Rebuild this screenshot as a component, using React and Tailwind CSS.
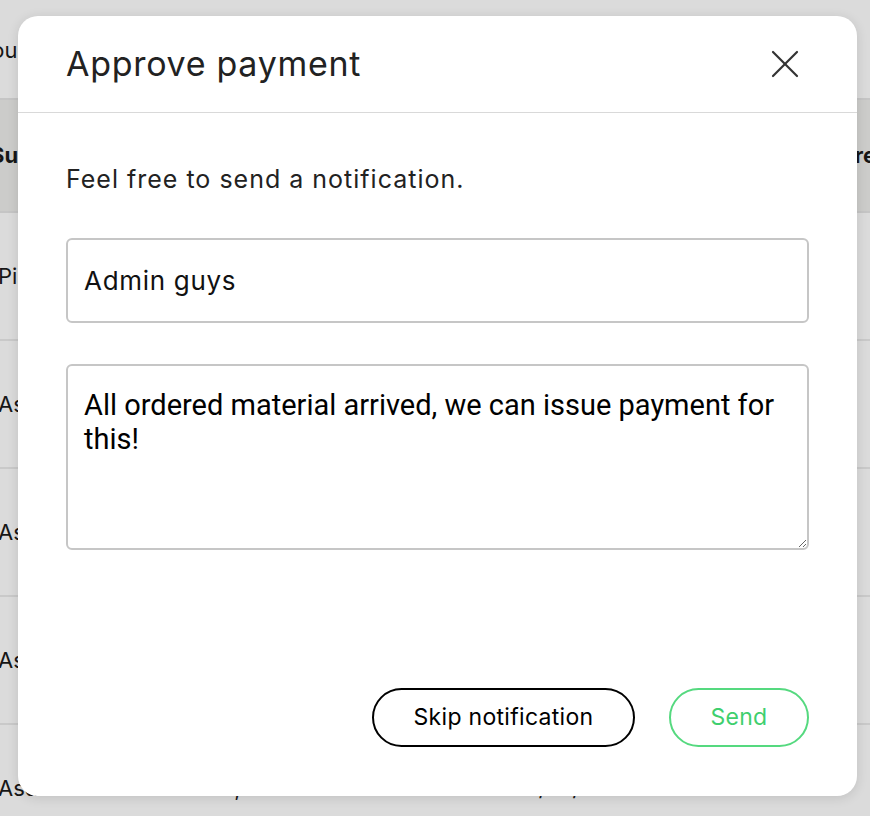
import { X } from "lucide-react";

const rows = [
  { name: "Pizza party", date: "Mon, 3rd", who: "Jim", when: "12/06/2023" },
  { name: "Asd", date: "Tue, 4th", who: "Ann", when: "13/06/2023" },
  { name: "Asd", date: "Wed, 5th", who: "Tom", when: "14/06/2023" },
  { name: "Asd", date: "Thu, 6th", who: "Eva", when: "15/06/2023" },
  { name: "Asd", date: "Fri, 20th", who: "Jim", when: "22/07/2023" },
];

const Background = () => (
  <div className="w-full h-full bg-white text-[#1a1a1a]">
    <p className="h-[98px] pt-[34px] -ml-[22px] text-[22px]">Your orders</p>
    <div className="h-[115px] bg-[#eeeeec] border-y-2 border-[#e6e6e6] flex items-center justify-between -ml-[10px] -mr-[6px] text-[22px] font-bold">
      <span>Supplier</span>
      <span>Store</span>
    </div>
    {rows.map((row, i) => (
      <div
        key={i}
        className="h-[128px] border-b-2 border-[#eaeaea] flex items-center gap-[90px] text-[22px] -ml-[2px]"
      >
        <span className="w-[120px]">{row.name}</span>
        <span>{row.date}</span>
        <span>{row.who}</span>
        <span>{row.when}</span>
      </div>
    ))}
  </div>
);

const ApproveModal = () => (
  <div className="absolute left-[18px] top-[16px] w-[839px] h-[780px] bg-white rounded-[20px] shadow-[0_2px_12px_rgba(0,0,0,0.12)] flex flex-col">
    <div className="h-[97px] px-[48px] flex items-center justify-between border-b border-[#d9d9d9]">
      <h2 className="text-[34px] tracking-[0.7px] text-[#222] leading-none">Approve payment</h2>
      <button className="text-[#333]">
        <X size={48} strokeWidth={1.1} />
      </button>
    </div>

    <div className="flex-1 flex flex-col px-[48px] pt-[50px] pb-[49px]">
      <p className="text-[25px] tracking-[1px] leading-[32px] text-[#222]">
        Feel free to send a notification.
      </p>

      <input
        defaultValue="Admin guys"
        className="mt-[43px] h-[85px] w-full border-2 border-[#c6c6c6] rounded-[6px] px-[16px] text-[26px] tracking-[0.7px] text-[#111] outline-none"
      />

      <textarea
        defaultValue="All ordered material arrived, we can issue payment for this!"
        className="mt-[41px] h-[186px] w-full border-2 border-[#c6c6c6] rounded-[6px] px-[16px] pt-[22px] text-[29px] leading-[34px] text-black outline-none"
        style={{ fontFamily: "Roboto, 'Liberation Sans', sans-serif" }}
      />

      <div className="flex-1" />

      <div className="flex justify-end gap-[34px]">
        <button className="h-[59px] w-[263px] rounded-full border-2 border-black text-[23px] tracking-[0.3px] text-black">
          Skip notification
        </button>
        <button className="h-[59px] w-[140px] rounded-full border-2 border-[#55d97f] text-[23px] tracking-[0.3px] text-[#3fcf6e]">
          Send
        </button>
      </div>
    </div>
  </div>
);

export default function App() {
  return (
    <div
      className="relative w-full h-[816px] overflow-hidden"
      style={{ fontFamily: "Inter, 'Noto Sans', sans-serif" }}
    >
      <Background />
      <div className="absolute inset-0 bg-[rgba(0,0,0,0.14)]" />
      <ApproveModal />
    </div>
  );
}
